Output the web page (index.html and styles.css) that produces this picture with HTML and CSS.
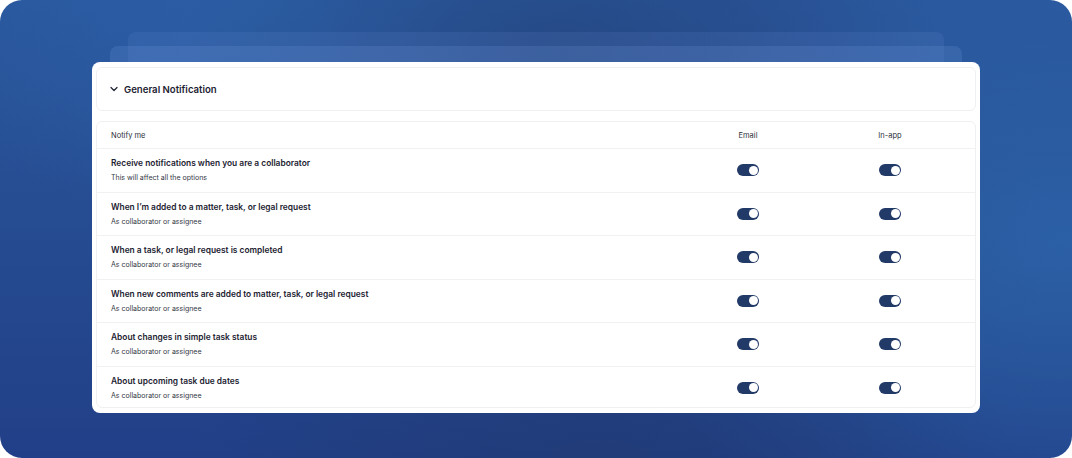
FILE: index.html
```html
<!DOCTYPE html>
<html lang="en">
<head>
  <meta charset="UTF-8" />
  <title>Notification settings</title>
  <meta name="viewport" content="width=device-width, initial-scale=1.0">
  <link rel="stylesheet" href="styles.css">
</head>
<body>
  <div class="stage">
    <div class="stack">
      <div class="card">
        <div class="section-head">
          <svg class="chevron" width="10" height="10" viewBox="0 0 10 10">
            <path d="M2 3.5 L5 6.5 L8 3.5" fill="none" stroke="#1c2231" stroke-width="1.2" stroke-linecap="round" stroke-linejoin="round"/>
          </svg>
          <span class="section-title">General Notification</span>
        </div>

        <div class="table">
          <div class="row head">
            <div class="cell-label">Notify me</div>
            <div class="cell-col">Email</div>
            <div class="cell-col">In-app</div>
          </div>

          <div class="row">
            <div class="cell-label">
              <div class="title">Receive notifications when you are a collaborator</div>
              <div class="sub">This will affect all the options</div>
            </div>
            <div class="cell-col"><span class="toggle on"></span></div>
            <div class="cell-col"><span class="toggle on"></span></div>
          </div>

          <div class="row">
            <div class="cell-label">
              <div class="title">When I’m added to a matter, task, or legal request</div>
              <div class="sub">As collaborator or assignee</div>
            </div>
            <div class="cell-col"><span class="toggle on"></span></div>
            <div class="cell-col"><span class="toggle on"></span></div>
          </div>

          <div class="row">
            <div class="cell-label">
              <div class="title">When a task, or legal request is completed</div>
              <div class="sub">As collaborator or assignee</div>
            </div>
            <div class="cell-col"><span class="toggle on"></span></div>
            <div class="cell-col"><span class="toggle on"></span></div>
          </div>

          <div class="row">
            <div class="cell-label">
              <div class="title">When new comments are added to matter, task, or legal request</div>
              <div class="sub">As collaborator or assignee</div>
            </div>
            <div class="cell-col"><span class="toggle on"></span></div>
            <div class="cell-col"><span class="toggle on"></span></div>
          </div>

          <div class="row">
            <div class="cell-label">
              <div class="title">About changes in simple task status</div>
              <div class="sub">As collaborator or assignee</div>
            </div>
            <div class="cell-col"><span class="toggle on"></span></div>
            <div class="cell-col"><span class="toggle on"></span></div>
          </div>

          <div class="row">
            <div class="cell-label">
              <div class="title">About upcoming task due dates</div>
              <div class="sub">As collaborator or assignee</div>
            </div>
            <div class="cell-col"><span class="toggle on"></span></div>
            <div class="cell-col"><span class="toggle on"></span></div>
          </div>
        </div>
      </div>
    </div>
  </div>
</body>
</html>
```

FILE: styles.css
```css
html, body {
  margin: 0;
  padding: 0;
  background: #fff;
}

body {
  font-family: Inter, "Noto Sans", sans-serif;
  color: #1c2231;
}

.stage {
  width: 1072px;
  height: 458px;
  border-radius: 22px;
  overflow: hidden;
  background:
    radial-gradient(ellipse 380px 240px at 560px 60px, rgba(34, 62, 115, 0.6), rgba(34, 62, 115, 0) 100%),
    radial-gradient(ellipse 420px 200px at 600px 470px, rgba(33, 58, 112, 0.7), rgba(33, 58, 112, 0) 100%),
    radial-gradient(ellipse 460px 320px at 1060px 240px, rgba(44, 98, 168, 0.9), rgba(44, 98, 168, 0) 100%),
    radial-gradient(ellipse 420px 220px at 300px 10px, rgba(44, 96, 168, 0.85), rgba(44, 96, 168, 0) 100%),
    linear-gradient(180deg, #2a579d 0%, #25498e 60%, #213f88 100%);
  padding-top: 62px;
  box-sizing: border-box;
}

/* faded sheets peeking out behind the card */
.stack {
  position: relative;
  width: 888px;
  margin-left: 92px;
}

.stack::before,
.stack::after {
  content: "";
  position: absolute;
  border-radius: 8px;
}

.stack::before {
  left: 36px;
  right: 36px;
  top: -30px;
  height: 60px;
  background: rgba(120, 160, 230, 0.12);
}

.stack::after {
  left: 18px;
  right: 18px;
  top: -16px;
  height: 60px;
  background: rgba(120, 160, 230, 0.18);
}

.card {
  position: relative;
  z-index: 1;
  background: #fff;
  border-radius: 8px;
  padding: 5px 4px 5px 4px;
  height: 351px;
  box-sizing: border-box;
}

.section-head {
  display: flex;
  align-items: center;
  gap: 5px;
  height: 44px;
  box-sizing: border-box;
  padding: 0 12px;
  border: 1px solid #eff0f2;
  border-radius: 6px;
}

.chevron {
  display: block;
}

.section-title {
  font-size: 9.6px;
  font-weight: 600;
  color: #1c2231;
}

.table {
  margin-top: 10px;
  border: 1px solid #eff0f2;
  border-radius: 6px;
  height: 287px;
  box-sizing: border-box;
  overflow: hidden;
}

.row {
  display: grid;
  grid-template-columns: 1fr 142px 142px;
  padding: 0 14px;
  height: 43.5px;
  box-sizing: border-box;
  border-top: 1px solid #f0f1f3;
  align-items: center;
}

.row.head {
  height: 26px;
  border-top: none;
  font-size: 7.5px;
  color: #2b2f38;
}

.cell-col {
  display: flex;
  justify-content: center;
  align-items: center;
}

.title {
  font-size: 8.4px;
  font-weight: 600;
  color: #1c2231;
  line-height: 12px;
}

.sub {
  font-size: 7px;
  color: #333844;
  line-height: 10px;
  margin-top: 4px;
}

.toggle {
  display: block;
  position: relative;
  width: 22px;
  height: 12px;
  border-radius: 6px;
  background: #e3e5ea;
  box-sizing: border-box;
}

.toggle::after {
  content: "";
  position: absolute;
  top: 1.5px;
  left: 1.5px;
  width: 9px;
  height: 9px;
  border-radius: 50%;
  background: #fff;
}

.toggle.on {
  background: #223a68;
}

.toggle.on::after {
  left: 11.5px;
}
```
